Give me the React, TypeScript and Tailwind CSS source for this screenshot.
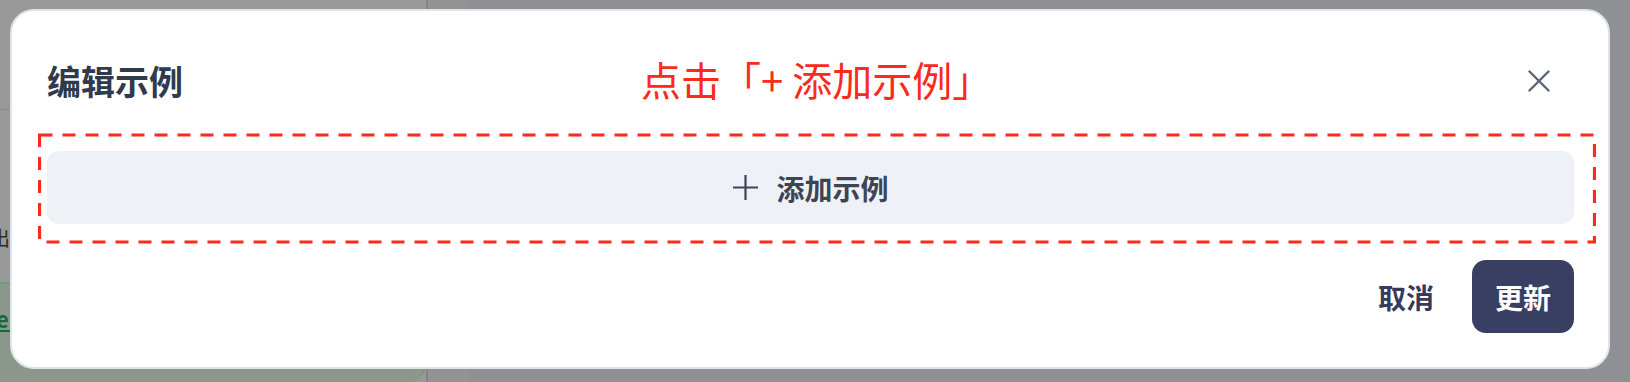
import React from 'react';

const font = "font-['Noto_Sans_CJK_SC','Noto_Sans',sans-serif]";

function CloseIcon() {
  return (
    <svg width="22" height="22" viewBox="0 0 22 22" fill="none">
      <path d="M1.5 1.5 20.5 20.5 M20.5 1.5 1.5 20.5" stroke="#5b6577" strokeWidth="2.4" strokeLinecap="round" />
    </svg>
  );
}

function PlusIcon() {
  return (
    <svg width="27" height="27" viewBox="0 0 27 27" fill="none">
      <path d="M13.5 1v25 M1 13.5h25" stroke="#3d4555" strokeWidth="2.2" />
    </svg>
  );
}

export default function App() {
  return (
    <div className={`relative w-[1630px] h-[382px] overflow-hidden bg-[#8e9093] ${font}`}>
      {/* page behind the overlay */}
      <div className="flex h-full">
        <div className="w-[426px] bg-[#999999] flex flex-col">
          <div className="h-[110px] border-b border-[#8a8a8a]" />
          <div className="mt-[118px] text-[20px] leading-none text-[#2c2c2c] -ml-[10px]">出</div>
          <div className="mt-[34px] flex-1 rounded-br-[18px] border-t-2 border-r-2 border-[#6e9d79] bg-[#8c978c] pt-[18px]">
            <span className="-ml-[4px] text-[22px] font-semibold text-[#17693a] underline">el</span>
          </div>
        </div>
        <div className="w-[2px] bg-[#858585]" />
        <div className="w-[41px] bg-[#939393]" />
        <div className="flex-1" />
      </div>

      {/* dialog */}
      <div className="absolute left-[10px] top-[9px] w-[1600px] rounded-[24px] border-2 border-[#dfe4ec] bg-white pl-[35px] pr-[34px] pt-[48px] pb-[34px]">
        <div className="flex h-[44px] items-center justify-between">
          <h2 className="text-[34px] font-bold leading-none text-[#2f3a4b]">编辑示例</h2>
          <button className="mr-[24px]">
            <CloseIcon />
          </button>
        </div>

        <button className="mt-[48px] flex h-[73px] w-full items-center justify-center gap-[17px] rounded-[12px] bg-[#eef1f6]">
          <PlusIcon />
          <span className="text-[28px] font-semibold leading-none text-[#3d4555]">添加示例</span>
        </button>

        <div className="mt-[36px] flex items-center justify-end gap-[38px]">
          <button className="text-[28px] font-bold leading-none text-[#363b5e]">取消</button>
          <button className="h-[73px] w-[102px] rounded-[14px] bg-[#393e63] text-[28px] font-bold leading-none text-white">
            更新
          </button>
        </div>

        {/* annotation */}
        <div className="absolute left-[629px] top-[48px] whitespace-pre text-[40px] leading-none text-[#fb2a1c]">点击「+ 添加示例」</div>
        <svg className="absolute left-[26px] top-[122px]" width="1558" height="111" fill="none">
          <rect x="1.5" y="2" width="1555" height="107" stroke="#fb2a1c" strokeWidth="3.2" strokeDasharray="13 10" />
        </svg>
      </div>
    </div>
  );
}
